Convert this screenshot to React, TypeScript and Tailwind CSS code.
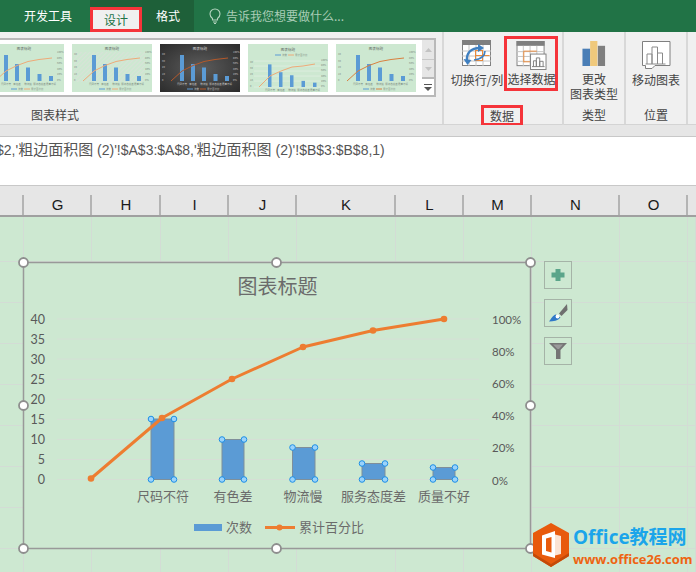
import React from "react";

const columns = [
  { w: 24, l: "" },
  { w: 68, l: "G" },
  { w: 69, l: "H" },
  { w: 68, l: "I" },
  { w: 68, l: "J" },
  { w: 99, l: "K" },
  { w: 68, l: "L" },
  { w: 68, l: "M" },
  { w: 88, l: "N" },
  { w: 68, l: "O" },
  { w: 8, l: "" },
];
const rowHeights = [45, 41, 41, 41, 41, 41, 41, 41, 41, 30];

function Thumb({ variant }: { variant: "plain" | "hatch" | "dark" | "top" | "strong" }) {
  const dark = variant === "dark";
  const top = variant === "top";
  const id = "t" + variant;
  const base = top ? 43 : 37;
  const scale = top ? 0.87 : 1;
  const bars = [26, 17, 13.5, 7, 5].map((h) => h * scale);
  const xs = [20, 31, 42, 53.5, 65];
  const pts = top
    ? "11,43 22,32 33,27 44,23 55,22 67,20"
    : "11,37 22,27 33,21.5 44,17.5 55,15.5 68,14";
  const lineCol = dark ? "#b5592a" : variant === "strong" ? "#d9803f" : "#eeaa78";
  const txt = dark ? "#c8c8c8" : "#7c8a7e";
  return (
    <svg width="80" height="48" viewBox="0 0 80 48" className="shrink-0">
      <defs>
        <radialGradient id={id + "g"} cx="50%" cy="50%" r="70%">
          <stop offset="0%" stopColor="#5c5c5c" />
          <stop offset="100%" stopColor="#2c2c2c" />
        </radialGradient>
        <pattern id={id + "p"} width="3" height="3" patternUnits="userSpaceOnUse" patternTransform="rotate(45)">
          <rect width="3" height="3" fill="#cde8d1" />
          <rect width="1" height="3" fill="#d8e2d8" />
        </pattern>
      </defs>
      <rect width="80" height="48" fill={dark ? `url(#${id}g)` : "#cde8d1"} />
      {variant === "hatch" && <rect x="2" y="8" width="71" height="30" fill={`url(#${id}p)`} />}
      {top &&
        [17, 22, 27, 32, 37, 43].map((y) => (
          <line key={y} x1="6" x2="73" y1={y} y2={y} stroke="#e4efe4" strokeWidth="0.7" />
        ))}
      <text x="40" y={top ? 6.5 : 5.5} textAnchor="middle" fontSize="3.6" fill={dark ? "#d8d8d8" : "#5f665f"}>
        图表标题
      </text>
      {xs.map((x, i) => (
        <rect key={x} x={x} y={base - bars[i]} width={top ? 3.5 : 4} height={bars[i]} fill="#5b9bd5" />
      ))}
      <polyline points={pts} fill="none" stroke={lineCol} strokeWidth="1" />
      {["40", "30", "20", "10", "0"].map((t, i) => (
        <text key={t} x="2" y={(top ? 19 : 11) + i * (top ? 6 : 6.5)} fontSize="2.5" fill={txt}>
          {t}
        </text>
      ))}
      {["100%", "80%", "60%", "40%", "20%", "0%"].map((t, i) => (
        <text key={t} x="73" y={(top ? 17 : 9) + i * (top ? 5.2 : 5.6)} fontSize="2.5" fill={txt}>
          {t}
        </text>
      ))}
      {["尺码不符", "有色差", "物流慢", "服务态度差", "质量不好"].map((t, i) => (
        <text key={t} x={xs[i] + 2} y={top ? 46.5 : 41} textAnchor="middle" fontSize="2.5" fill={txt}>
          {t}
        </text>
      ))}
      <line x1="27" x2="33" y1={top ? 11 : 45} y2={top ? 11 : 45} stroke="#5b9bd5" strokeWidth="1" />
      <text x="34" y={top ? 12 : 46} fontSize="2.5" fill={txt}>次数</text>
      <line x1="40" x2="46" y1={top ? 11 : 45} y2={top ? 11 : 45} stroke={lineCol} strokeWidth="1" />
      <text x="47" y={top ? 12 : 46} fontSize="2.5" fill={txt}>累计百分比</text>
    </svg>
  );
}

function SwitchIcon() {
  return (
    <svg width="30" height="27" viewBox="0 0 30 27">
      <rect x="0.5" y="0.5" width="28" height="25" fill="#fff" stroke="#808080" />
      <rect x="0" y="0" width="29" height="5" fill="#7f7f7f" />
      <path d="M0 11h29M0 16h29M0 21h29M7 5v21M14 5v21M21 5v21" stroke="#c4c4c4" strokeWidth="1" fill="none" />
      <rect x="13.5" y="10.5" width="7" height="10" fill="none" stroke="#e98a3b" />
      <path d="M13.5 15.5h14" stroke="#e98a3b" />
      <path d="M5 21c-1-8 4-13 13-13" fill="none" stroke="#3f7fc0" strokeWidth="2.4" />
      <path d="M16 4l6 4-6 4z" fill="#3f7fc0" />
      <path d="M23 11c0 5-4 8-11 9" fill="none" stroke="#3f7fc0" strokeWidth="1.6" />
      <path d="M1.500 19l4 6 4-5z" fill="#3f7fc0" />
    </svg>
  );
}

function SelectIcon() {
  return (
    <svg width="32" height="30" viewBox="0 0 32 30">
      <rect x="0.5" y="0.5" width="28" height="25" fill="#fff" stroke="#808080" />
      <rect x="0" y="0" width="29" height="5" fill="#7f7f7f" />
      <path d="M0 11h29M0 16h29M0 21h29M7 5v21M14 5v21M21 5v21" stroke="#c4c4c4" fill="none" />
      <path d="M7.500 22V10.500H21" fill="none" stroke="#e98a3b" />
      <path d="M7.500 21.500H14" fill="none" stroke="#e98a3b" />
      <rect x="14.500" y="13.500" width="16" height="16" fill="#fff" stroke="#808080" />
      <path d="M17.500 26.500v-6h3v6M20.500 26.500v-9h3.500v9M24 26.500v-5.500h3.500v5.500" fill="none" stroke="#808080" />
      <path d="M16 26.500h13" stroke="#808080" />
    </svg>
  );
}

function ChangeIcon() {
  return (
    <svg width="24" height="26" viewBox="0 0 24 26">
      <rect x="0" y="8" width="8" height="18" fill="#4a7eb6" />
      <rect x="8" y="0" width="7.500" height="26" fill="#f0c97c" />
      <rect x="16" y="5" width="7.500" height="21" fill="#7f7f7f" />
    </svg>
  );
}

function MoveIcon() {
  return (
    <svg width="29" height="28" viewBox="0 0 29 28">
      <path d="M0.500 0.500H28V24.500H13l-3 3H3.500V24.500H0.500z" fill="#fff" stroke="#7f7f7f" />
      <path d="M5 23V13h5v10M10 23V6h5.500v17M15.500 23v-11h5v11" fill="none" stroke="#8a8a8a" />
      <path d="M3.500 23h20" stroke="#8a8a8a" />
    </svg>
  );
}

function Chart() {
  const labelCls = "font-['Lato','Noto_Sans_CJK_SC',sans-serif]";
  const ox = 23;
  const oy = 263;
  const g = (x: number, y: number) => ({ x: x - ox, y: y - oy });
  const p = (x: number, y: number) => `${x - ox},${y - oy}`;
  const left = ["40", "35", "30", "25", "20", "15", "10", "5", "0"];
  const right = ["100%", "80%", "60%", "40%", "20%", "0%"];
  const bars = [
    [151, 419, 174],
    [222, 439.5, 244],
    [292.500, 447.500, 315],
    [362, 463.500, 385],
    [433, 467.500, 455],
  ];
  const cats = [
    ["尺码不符", 163],
    ["有色差", 233],
    ["物流慢", 303],
    ["服务态度差", 373.500],
    ["质量不好", 444],
  ] as const;
  const line = [
    [91, 478.500],
    [162, 418],
    [232, 379],
    [303, 347],
    [373, 330.500],
    [444, 319],
  ];
  const handles = [
    [23.500, 262.500],
    [276.500, 262.500],
    [530.500, 262.500],
    [23.500, 405.500],
    [530.500, 405.500],
    [23.500, 548.500],
    [276.500, 548.500],
    [530.500, 548.500],
  ];
  return (
    <svg width="520" height="300" viewBox="-6 -6 520 300" className={"absolute left-[17px] top-[40px] " + labelCls}>
      <rect x="0.500" y="-0.500" width="507" height="286" fill="#cde8d1" stroke="#999999" strokeWidth="1.500" />
      <text {...g(277.500, 294)} textAnchor="middle" fontSize="20" fill="#6b6b6b">图表标题</text>
      {left.map((t, i) => {
        const y = 319 + i * 20.070;
        return (
          <g key={t}>
            <line x1={57 - ox} x2={479 - ox} y1={y - oy} y2={y - oy} stroke="#d6dfd6" />
            <text {...g(45, y + 4.500)} textAnchor="end" fontSize="12.500" fill="#595959">{t}</text>
          </g>
        );
      })}
      {right.map((t, i) => (
        <text key={t} {...g(492, 323.500 + i * 32.200)} fontSize="11.500" fill="#595959">{t}</text>
      ))}
      {cats.map(([t, x]) => (
        <text key={t} {...g(x, 501)} textAnchor="middle" fontSize="13" fill="#6b6b6b">{t}</text>
      ))}
      {bars.map(([x1, y1, x2]) => (
        <rect key={x1} x={x1 - ox} y={y1 - oy} width={x2 - x1} height={479.500 - y1} fill="#5b9bd5" stroke="#7f8f9a" />
      ))}
      <polyline points={line.map(([x, y]) => p(x, y)).join(" ")} fill="none" stroke="#ed7d31" strokeWidth="3" strokeLinejoin="round" />
      {line.map(([x, y]) => (
        <circle key={x} cx={x - ox} cy={y - oy} r="3.300" fill="#ed7d31" />
      ))}
      {bars.flatMap(([x1, y1, x2]) =>
        [
          [x1, y1],
          [x2, y1],
          [x1, 479.500],
          [x2, 479.500],
        ].map(([x, y]) => (
          <circle key={`${x}-${y}`} cx={x - ox} cy={y - oy} r="2.800" fill="#9ad3fb" stroke="#1e8fe6" />
        ))
      )}
      <rect x={194 - ox} y={524 - oy} width="28" height="7" fill="#5b9bd5" />
      <text {...g(226, 532)} fontSize="13" fill="#6b6b6b">次数</text>
      <line x1={265 - ox} x2={295 - ox} y1={527.500 - oy} y2={527.500 - oy} stroke="#ed7d31" strokeWidth="3" />
      <circle cx={279.500 - ox} cy={527.500 - oy} r="3" fill="#ed7d31" />
      <text {...g(299, 532)} fontSize="13" fill="#6b6b6b">累计百分比</text>
      {handles.map(([x, y]) => (
        <circle key={`${x}-${y}`} cx={x - ox} cy={y - oy} r="4.500" fill="#fff" stroke="#8e8e8e" strokeWidth="1.800" />
      ))}
    </svg>
  );
}

function SideButton({ children }: { children: React.ReactNode }) {
  return (
    <div className="flex h-[28px] w-[28px] items-center justify-center border border-[#a5b3a7] bg-[#cde8d1]">
      {children}
    </div>
  );
}

function Watermark() {
  return (
    <div className="absolute left-[532px] top-[306px] flex items-start">
      <svg width="38" height="44" viewBox="0 0 38 44">
        <path d="M19 0L37 10V33L19 44L1 33V10z" fill="#e85a0c" />
        <path d="M37 33L19 44L1 33L1 30L19 41L37 30z" fill="#c44a08" />
        <path d="M10 12.500L23 8V35L10 31.500z" fill="#fff" />
        <path d="M23 11.500L29 13V31L23 32.500z" fill="#fbe3d3" />
        <path d="M14 15.500L19.500 14V29.500L14 28z" fill="#e85a0c" />
      </svg>
      <div className="ml-[3px] flex flex-col">
        <div className="font-['Open_Sans','Noto_Sans_CJK_SC',sans-serif] mt-[1px] h-[27px] whitespace-nowrap text-[19px] leading-[27px] font-bold text-[#1ba5ea]">
          Office教程网
        </div>
        <div className="font-['Open_Sans',sans-serif] whitespace-nowrap text-[13px] leading-[16px] font-bold text-[#ee6411]">
          www.office26.com
        </div>
      </div>
    </div>
  );
}

export default function App() {
  return (
    <div className="relative flex h-[572px] w-[696px] flex-col overflow-hidden bg-[#cde8d1] font-['Noto_Sans_CJK_SC',sans-serif]">
      {/* Title tabs */}
      <div className="flex h-[32px] shrink-0 bg-[#217346] text-[12px] text-white">
        <div className="flex w-[90px] items-center justify-center pl-[6px]">开发工具</div>
        <div className="flex w-[104px] bg-[#1e6039] pt-[7px]">
          <div className="flex h-[25px] w-[52px] items-center justify-center border-[3px] border-[#f5343a] bg-[#f0f0f0] text-[#217346]">
            设计
          </div>
          <div className="flex w-[52px] items-center justify-center pb-[7px]">格式</div>
        </div>
        <div className="ml-[15px] flex items-center gap-[5px] text-[#a9cdb6]">
          <svg width="12" height="16" viewBox="0 0 12 16" fill="none" stroke="#b5d5c0" strokeWidth="1.100">
            <path d="M3.500 10.500C2 9.300 1 7.800 1 6a5 5 0 0110 0c0 1.800-1 3.300-2.500 4.500V12h-5z" />
            <path d="M4 14h4M5 15.500h2" />
          </svg>
          <span>告诉我您想要做什么...</span>
        </div>
      </div>

      {/* Ribbon */}
      <div className="flex h-[93px] shrink-0 border-b border-[#d4d4d4] bg-[#f0f0f0] text-[12px] text-[#444444]">
        <div className="flex w-[444px] shrink-0 flex-col border-r-2 border-[#d8d8d8]">
          <div className="mt-[6px] flex h-[60px] w-[436px] border-y-2 border-r-2 border-[#b9b9b9]">
            <div className="flex w-[422px] shrink-0 items-center overflow-hidden bg-white">
              <div className="ml-[-16px] flex gap-[8px]">
                <Thumb variant="plain" />
                <Thumb variant="hatch" />
                <Thumb variant="dark" />
                <Thumb variant="top" />
                <Thumb variant="strong" />
              </div>
            </div>
            <div className="flex flex-1 flex-col">
              <div className="flex h-[20px] items-center justify-center border-b border-[#c8c8c8] bg-[#e6e6e6]">
                <svg width="7" height="4"><path d="M3.500 0L7 4H0z" fill="#c3c3c3" /></svg>
              </div>
              <div className="flex h-[19px] items-center justify-center border-b-2 border-[#b9b9b9] bg-[#e6e6e6]">
                <svg width="7" height="4"><path d="M0 0H7L3.500 4z" fill="#c3c3c3" /></svg>
              </div>
              <div className="flex flex-1 items-center justify-center bg-white">
                <svg width="8" height="7">
                  <path d="M0 .5H8" stroke="#555" />
                  <path d="M0 3H8L4 7z" fill="#555" />
                </svg>
              </div>
            </div>
          </div>
          <div className="mt-[9px] ml-[31px] leading-[18px]">图表样式</div>
        </div>

        {/* Data group */}
        <div className="flex h-[93px] w-[120px] shrink-0 flex-col border-r-2 border-[#d8d8d8]">
          <div className="flex h-[59px] pt-[4px]">
            <div className="flex w-[60px] shrink-0 flex-col items-center pt-[4px] pl-[6px]">
              <SwitchIcon />
              <span className="mt-[4px] whitespace-nowrap leading-[18px]">切换行/列</span>
            </div>
            <div className="flex h-[55px] w-[54px] flex-col items-center border-[3px] border-[#f5343a] pt-[2px] pl-[1px]">
              <SelectIcon />
              <span className="whitespace-nowrap leading-[18px]">选择数据</span>
            </div>
          </div>
          <div className="mt-[14px] ml-[37px] flex h-[21px] w-[42px] items-center justify-center border-[3px] border-[#f5343a]">
            数据
          </div>
        </div>

        {/* Type group */}
        <div className="flex w-[62px] shrink-0 flex-col items-center border-r-2 border-[#d8d8d8] pt-[9px]">
          <ChangeIcon />
          <span className="mt-[5px] leading-[15px]">更改</span>
          <span className="leading-[15px]">图表类型</span>
          <span className="mt-[5px] leading-[18px]">类型</span>
        </div>

        {/* Position group */}
        <div className="flex w-[62px] shrink-0 flex-col items-center border-r-2 border-[#d8d8d8] pt-[9px]">
          <MoveIcon />
          <span className="mt-[2px] leading-[18px]">移动图表</span>
          <span className="mt-[17px] leading-[18px]">位置</span>
        </div>
      </div>

      {/* Band */}
      <div className="h-[11px] shrink-0 bg-[#e6e6e6]" />

      {/* Formula bar */}
      <div className="h-[50px] shrink-0 overflow-hidden border-y-[1.500px] border-[#c8c8c8] bg-white">
        <div className="ml-[-4px] whitespace-nowrap pt-[2px] font-['Liberation_Sans','Noto_Sans_CJK_SC',sans-serif] text-[14px] leading-[22px] text-[#555555]">
          $2,'<span className="text-[15px]">粗边面积图</span> (2)'!$A$3:$A$8,'<span className="text-[15px]">粗边面积图</span> (2)'!$B$3:$B$8,1)
        </div>
      </div>

      {/* Column header */}
      <div className="flex h-[31px] shrink-0 border-b-2 border-[#a0a0a0] bg-[#e6e6e6] font-['Liberation_Sans',sans-serif] text-[15px] text-[#1a1a1a]">
        {columns.map((c, i) => (
          <div key={i} style={{ width: c.w }} className="flex shrink-0 flex-col justify-end">
            <div className={"flex h-[20px] items-center justify-center pl-[1px] " + (i < 10 ? "border-r-2 border-[#b4b4b4]" : "")}>
              {c.l}
            </div>
          </div>
        ))}
      </div>

      {/* Sheet */}
      <div className="relative flex-1 overflow-hidden">
        {rowHeights.map((h, r) => (
          <div key={r} style={{ height: h }} className="flex">
            {columns.map((c, i) => (
              <div key={i} style={{ width: c.w }} className="shrink-0 border-r border-b border-[#d3dcd5]" />
            ))}
          </div>
        ))}
        <Chart />
        <div className="absolute left-[544px] top-[44px] flex flex-col gap-[10px]">
          <SideButton>
            <svg width="16" height="16" viewBox="0 0 16 16">
              <path d="M5.500 2h5v3.500H14.500v5h-4V14h-5v-3.500h-4v-5h4z" fill="#5ba58a" />
            </svg>
          </SideButton>
          <SideButton>
            <svg width="24" height="24" viewBox="0 0 24 24">
              <path d="M21 3L21.500 9L15.500 15L13 12.500z" fill="#6f6f6f" />
              <path d="M10 13.500C7 14 5 18 3 20.500C7.500 20.500 12 19.500 14.500 16.500z" fill="#2f78c8" />
              <circle cx="11.500" cy="15.500" r="1.900" fill="#fff" />
            </svg>
          </SideButton>
          <SideButton>
            <svg width="20" height="18" viewBox="0 0 20 18">
              <path d="M1 1H19L12.500 8V17H8V8z" fill="#757575" />
              <path d="M5 2.500h10l-4 4.500H9.500z" fill="#9a9a9a" />
            </svg>
          </SideButton>
        </div>
        <Watermark />
      </div>
    </div>
  );
}
